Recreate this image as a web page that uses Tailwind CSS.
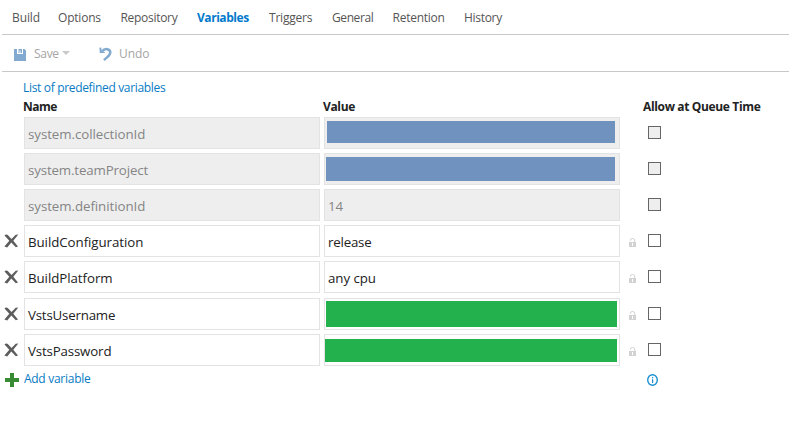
<!DOCTYPE html>
<html lang="en">
<head>
<meta charset="utf-8">
<title>Build definition variables</title>
<script src="https://cdn.jsdelivr.net/npm/@tailwindcss/browser@4"></script>
</head>
<body class="w-[789px] h-[446px] overflow-hidden bg-white font-['Open_Sans','Noto_Sans',sans-serif] text-[12px] leading-4 text-[#222]">
<svg class="hidden">
  <symbol id="remove" viewBox="0 0 15 14"><path d="M.5 1.500C1.200.2 3 .2 3.800 1l3.700 4L11.700.8 14.300.5 9.300 6.800l4.700 5.700-2.200.7-4.500-4.600L3.200 13.500.4 12.400l4.900-5.600z" fill="#5d5d5d"/></symbol>
  <symbol id="lock" viewBox="0 0 7 9"><path d="M1.300 2.700V2Q1.500.5 3.500.5T5.700 2v2" fill="none" stroke="#d2d2d2"/><path d="M0 4h7v5H0z" fill="#d2d2d2"/><path d="M3 5h1v3H3z" fill="#fff"/></symbol>
</svg>
<nav class="ml-[2px] h-[35px] border-b border-[#c8c8c8] pl-[10px] pt-[10px] flex text-[#555] whitespace-nowrap">
  <a class="w-[46px] tracking-[-0.1px]">Build</a>
  <a class="w-[62.5px] tracking-[-0.2px]">Options</a>
  <a class="w-[76.5px] tracking-[-0.3px]">Repository</a>
  <a class="w-[72px] font-bold text-[#007acc] tracking-[-0.45px]">Variables</a>
  <a class="w-[63px] tracking-[-0.2px]">Triggers</a>
  <a class="w-[60.5px] tracking-[-0.4px]">General</a>
  <a class="w-[71.500px] tracking-[-0.25px]">Retention</a>
  <a class="tracking-[-0.3px]">History</a>
</nav>
<div class="ml-[2px] h-[37px] border-b border-[#c8c8c8] pl-[12px] flex items-center text-[#a5a5a5]">
  <svg class="w-3 h-3 mt-[3px]" viewBox="0 0 12 12"><path d="M0 0h3v5h6V0h1.500L12 1.500V12H0zM4.500 0H8v4H6.500V1.500H5.500V4h-1z" fill="#82a9cf"/></svg>
  <span class="ml-[8px] w-[28px] mt-[2px] tracking-[-0.3px]">Save</span>
  <svg class="w-2 h-1 -mt-[1px]" viewBox="0 0 8 4"><path d="M0 0h8L4 4z" fill="#c8c8c8"/></svg>
  <svg class="ml-[29px] w-[13px] h-[14px] mt-[2px]" viewBox="0 0 13 14"><path d="M3 4.200C6 .9 11.300 1.600 11.300 5.500 11.300 8.500 8 10 5 13.200" fill="none" stroke="#82a9cf" stroke-width="2.500"/><path d="M.4.800 2.400.5V3.500L6 5.500V6H.8z" fill="#82a9cf"/></svg>
  <span class="ml-[7px] mt-[2px] tracking-[-0.1px]">Undo</span>
</div>
<main class="pt-[8px]">
  <a class="block ml-[23px] text-[#087bc4] tracking-[-0.33px]">List of predefined variables</a>
  <div class="flex pl-[23px] mt-[3px] h-[18px] font-bold tracking-[-0.35px]">
    <span class="w-[300px] tracking-[-0.5px]">Name</span><span class="w-[320px]">Value</span><span>Allow at Queue Time</span>
  </div>
  <div class="text-[13.3px] tracking-[-0.06px] leading-[18px] flex flex-col gap-1">
    <div class="flex h-8 pl-6 text-[#858585]">
      <div class="w-[296px] border border-[#e3e3e3] bg-[#eee] px-[3px] pt-[7px]">system.collectionId</div>
      <div class="ml-1 w-[296px] border border-[#e3e3e3] bg-[#eee] pl-[2px] pt-[3px]"><div class="w-[288px] h-[22px] bg-[#7092be]"></div></div>
      <div class="ml-7 mt-[9px] size-[13px] border border-[#666] bg-[#eee]"></div>
    </div>
    <div class="flex h-8 pl-6 text-[#858585]">
      <div class="w-[296px] border border-[#e3e3e3] bg-[#eee] px-[3px] pt-[7px] tracking-[-0.14px]">system.teamProject</div>
      <div class="ml-1 w-[296px] border border-[#e3e3e3] bg-[#eee] pl-[1px] pt-[3px]"><div class="w-[289px] h-[24px] bg-[#7092be]"></div></div>
      <div class="ml-7 mt-[9px] size-[13px] border border-[#666] bg-[#eee]"></div>
    </div>
    <div class="flex h-8 pl-6 text-[#858585]">
      <div class="w-[296px] border border-[#e3e3e3] bg-[#eee] px-[3px] pt-[7px]">system.definitionId</div>
      <div class="ml-1 w-[296px] border border-[#e3e3e3] bg-[#eee] px-[3px] pt-[7px]">14</div>
      <div class="ml-7 mt-[9px] size-[13px] border border-[#666] bg-[#eee]"></div>
    </div>
    <div class="flex h-8 pl-1">
      <svg class="w-[15px] h-[14px] mt-[9px] mr-[5px]"><use href="#remove"/></svg>
      <div class="w-[296px] border border-[#e3e3e3] px-[3px] pt-[7px]">BuildConfiguration</div>
      <div class="ml-1 w-[296px] border border-[#e3e3e3] px-[3px] pt-[7px] tracking-[-0.2px]">release</div>
      <svg class="ml-[9px] mt-[13px] w-[7px] h-[9px]"><use href="#lock"/></svg>
      <div class="ml-3 mt-[9px] size-[13px] border border-[#666]"></div>
    </div>
    <div class="flex h-8 pl-1">
      <svg class="w-[15px] h-[14px] mt-[9px] mr-[5px]"><use href="#remove"/></svg>
      <div class="w-[296px] border border-[#e3e3e3] px-[3px] pt-[7px]">BuildPlatform</div>
      <div class="ml-1 w-[296px] border border-[#e3e3e3] px-[3px] pt-[7px]">any cpu</div>
      <svg class="ml-[9px] mt-[13px] w-[7px] h-[9px]"><use href="#lock"/></svg>
      <div class="ml-3 mt-[9px] size-[13px] border border-[#666]"></div>
    </div>
    <div class="flex h-8 pl-1 mt-[1px]">
      <svg class="w-[15px] h-[14px] mt-[9px] mr-[5px]"><use href="#remove"/></svg>
      <div class="w-[296px] border border-[#e3e3e3] px-[3px] pt-[7px] tracking-[-0.2px]">VstsUsername</div>
      <div class="ml-1 w-[296px] border border-[#e3e3e3] pl-[1px] pt-[2px]"><div class="w-[291px] h-[26px] bg-[#22b14c]"></div></div>
      <svg class="ml-[9px] mt-[13px] w-[7px] h-[9px]"><use href="#lock"/></svg>
      <div class="ml-3 mt-[9px] size-[13px] border border-[#666]"></div>
    </div>
    <div class="flex h-8 pl-1">
      <svg class="w-[15px] h-[14px] mt-[9px] mr-[5px]"><use href="#remove"/></svg>
      <div class="w-[296px] border border-[#e3e3e3] px-[3px] pt-[7px] tracking-[-0.16px]">VstsPassword</div>
      <div class="ml-1 w-[296px] border border-[#e3e3e3] pt-[4px]"><div class="w-[292px] h-[23px] bg-[#22b14c]"></div></div>
      <svg class="ml-[9px] mt-[13px] w-[7px] h-[9px]"><use href="#lock"/></svg>
      <div class="ml-3 mt-[9px] size-[13px] border border-[#666]"></div>
    </div>
  </div>
  <div class="flex pl-[5px] pt-[5px]">
    <svg class="w-[14px] h-[14px] mt-[2px]" viewBox="0 0 14 14"><path d="M5 0h4v5h5v4H9v5H5V9H0V5h5z" fill="#388a34"/></svg>
    <a class="ml-[5px] w-[623px] text-[#087bc4] tracking-[-0.28px]">Add variable</a>
    <svg class="mt-[3px] w-[11px] h-[12px]" viewBox="0 0 11 12"><ellipse cx="5.500" cy="6" rx="4.800" ry="5.200" fill="none" stroke="#1c8fd1" stroke-width="1.400"/><path d="M5 3h1.200v1.200H5zM5 5.200h1.200V9H5z" fill="#1c8fd1"/></svg>
  </div>
</main>
</body>
</html>
